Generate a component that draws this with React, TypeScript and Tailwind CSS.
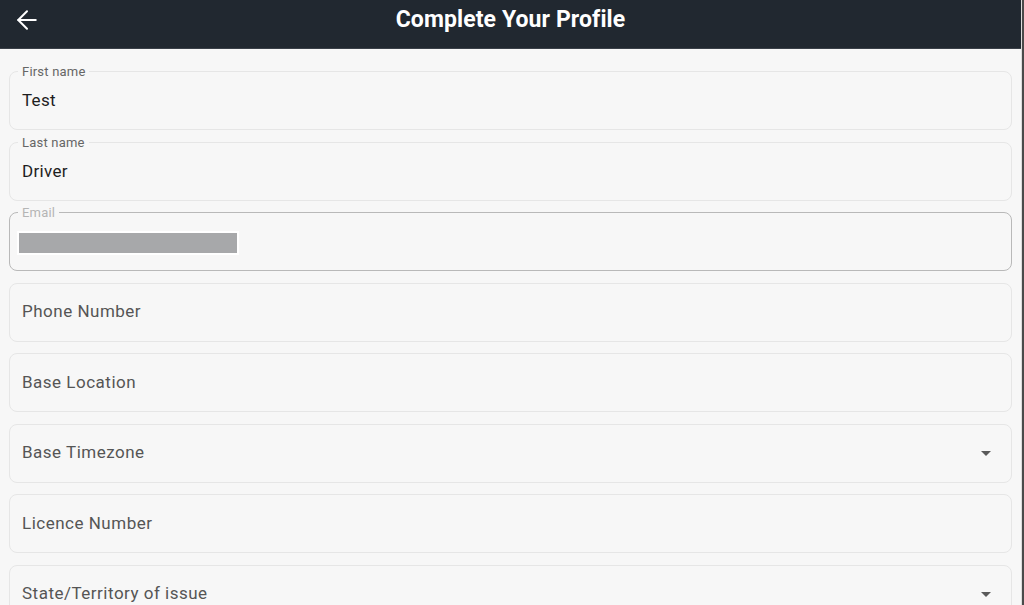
import { ArrowLeft } from "lucide-react"

type Field = {
  label: string
  value?: string
  select?: boolean
  redacted?: boolean
}

const fields: Field[] = [
  { label: "First name", value: "Test" },
  { label: "Last name", value: "Driver" },
  { label: "Email", redacted: true },
  { label: "Phone Number" },
  { label: "Base Location" },
  { label: "Base Timezone", select: true },
  { label: "Licence Number" },
  { label: "State/Territory of issue", select: true },
]

function DropArrow() {
  return (
    <svg width="10" height="5" viewBox="0 0 10 5" className="shrink-0">
      <path d="M0 0 L10 0 L5 5 Z" fill="#5a5a5a" />
    </svg>
  )
}

function FormField({ field }: { field: Field }) {
  const filled = field.value !== undefined || field.redacted

  return (
    <div
      className={`relative h-[59px] shrink-0 rounded-[8px] border flex items-center justify-between pl-[12px] pr-[20px] ${
        field.redacted ? "border-[#b9b9b9]" : "border-[#e6e6e6]"
      }`}
    >
      {filled && (
        <span
          className={`absolute left-[8px] top-[-8px] px-[4px] bg-[#f7f7f7] text-[13px] leading-[16px] tracking-[0.2px] ${
            field.redacted ? "text-[#b5b5b5]" : "text-[#666666]"
          }`}
        >
          {field.label}
        </span>
      )}
      {field.redacted ? (
        <div className="ml-[-5px] w-[222px] h-[24px] bg-white p-[2px] mb-[-2px]">
          <div className="h-full w-full bg-[#a7a8aa]" />
        </div>
      ) : filled ? (
        <span className="text-[17px] leading-[20px] text-[#1e1e1e] tracking-[0.3px] mt-[-1px]">
          {field.value}
        </span>
      ) : (
        <span className="text-[17px] leading-[20px] text-[#555555] tracking-[0.5px] mt-[-2px]">
          {field.label}
        </span>
      )}
      {field.select && <DropArrow />}
    </div>
  )
}

export default function App() {
  return (
    <div
      className="h-[605px] w-[1024px] overflow-hidden bg-[#f7f7f7] flex"
      style={{ fontFamily: "Roboto, 'Liberation Sans', sans-serif" }}
    >
      <div className="flex-1 flex flex-col min-w-0">
        <header className="h-[49px] shrink-0 bg-[#212830] flex items-center relative border-b border-[#3a4048]">
          <button className="absolute left-[12px] top-[5px] text-white">
            <ArrowLeft size={30} strokeWidth={1.6} />
          </button>
          <h1 className="flex-1 text-center text-white text-[23px] leading-[28px] font-bold tracking-[0.1px] mt-[-9px]">
            Complete Your Profile
          </h1>
        </header>
        <main className="flex flex-col gap-[11.57px] pt-[22px] pl-[9px] pr-[9px]">
          {fields.map((f) => (
            <FormField key={f.label} field={f} />
          ))}
        </main>
      </div>
      <div className="w-[3px] shrink-0 flex">
        <div className="w-[1px] bg-[#dcdcdc]" />
        <div className="w-[2px] bg-[#4a4a4a]" />
      </div>
    </div>
  )
}
